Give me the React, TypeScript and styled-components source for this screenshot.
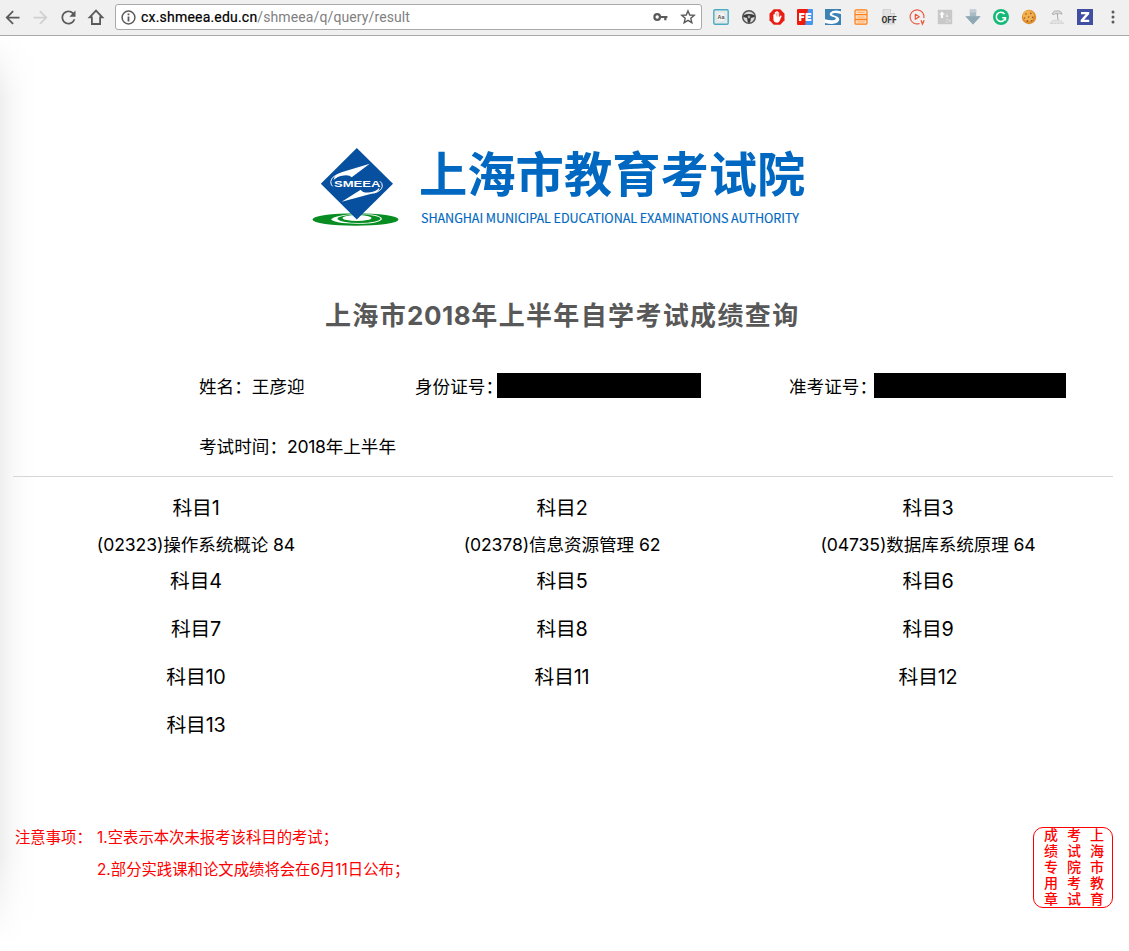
import React from "react";
import styled, { createGlobalStyle } from "styled-components";

const GlobalStyle = createGlobalStyle`
  * { box-sizing: border-box; }
  html, body { margin: 0; padding: 0; background: #fff; }
  body { overflow: hidden; }
`;

const cjk = `"Noto Sans CJK SC", sans-serif`;

const Page = styled.div`
  width: 1129px;
  height: 951px;
  display: flex;
  flex-direction: column;
  color: #000;
  font-family: Inter, ${cjk};
`;

const Toolbar = styled.header`
  height: 36px;
  flex: none;
  display: flex;
  align-items: flex-start;
  background: #f0f0f0;
  border-bottom: 1px solid #a9a9a9;
`;

const IconRow = styled.div<{ $start: number }>`
  display: flex;
  flex: none;
  height: 34px;
  margin-left: ${(p) => p.$start}px;
`;

const IconCell = styled.span`
  width: 28px;
  height: 34px;
  display: flex;
  align-items: center;
  justify-content: center;
  flex: none;
  svg { display: block; overflow: visible; }
`;

const AddressBar = styled.div`
  width: 587px;
  height: 26px;
  margin: 4px 0 0 5px;
  padding: 0 5px 0 5px;
  display: flex;
  align-items: center;
  background: #fff;
  border: 1px solid #a9a9a9;
  border-radius: 3px;
  svg { flex: none; display: block; }
`;

const Url = styled.span`
  flex: 1;
  margin-left: 5px;
  font: 400 14px/22px Roboto, sans-serif;
  letter-spacing: 0.11px;
  color: #808080;
  white-space: nowrap;
  b { font-weight: 400; letter-spacing: 0.2px; color: #000; -webkit-text-stroke: 0.2px #000; }
`;

const AddressActions = styled.span`
  display: flex;
  align-items: center;
  gap: 12px;
`;

const Sheet = styled.main`
  flex: 1;
  padding: 108px 16px 0 13px;
  display: flex;
  flex-direction: column;
  background:
    linear-gradient(to bottom, #fff 0, rgba(255, 255, 255, 0) 60px, rgba(255, 255, 255, 0) 820px, #fff 910px),
    linear-gradient(to right, #efefef 0, #f8f8f8 12px, #fdfdfd 24px, #fff 36px);
`;

const Brand = styled.div`
  height: 90px;
  padding-left: 299px;
  display: flex;
  svg { display: block; flex: none; }
`;

const BrandText = styled.div`
  margin-left: 18px;
  display: flex;
  flex-direction: column;
  color: #0068c0;
  font-family: ${cjk};
  white-space: nowrap;
`;

const BrandName = styled.span`
  font-size: 48.3px;
  line-height: 60px;
  height: 60px;
  margin-top: -3px;
  font-weight: 700;
`;

const BrandLatin = styled.span`
  font-size: 12.6px;
  line-height: 18px;
  margin: 8px 0 0 2px;
  letter-spacing: -0.07px;
  -webkit-text-stroke: 0.15px #0068c0;
`;

const Title = styled.h1`
  margin: 62px 0 0;
  height: 40px;
  padding-left: 312px;
  font-size: 26px;
  line-height: 40px;
  font-weight: 700;
  letter-spacing: 1.35px;
  color: #585858;
  white-space: nowrap;
`;

const Info = styled.dl`
  margin: 37px 0 0;
  height: 104px;
  padding-left: 186px;
  display: grid;
  grid-template-columns: 216px 374px 1fr;
  grid-template-rows: 26px 26px;
  row-gap: 34px;
  border-bottom: 1px solid #d6d6d6;
`;

const Field = styled.div<{ $wide?: boolean }>`
  display: flex;
  grid-column: ${(p) => (p.$wide ? "1 / -1" : "auto")};
  font-size: 17.6px;
  line-height: 28px;
  white-space: nowrap;
`;

const Label = styled.dt<{ $tight?: boolean }>`
  ${(p) => (p.$tight ? "width: 81px;" : "")}
`;

const Value = styled.dd`
  margin: 0;
`;

const Redacted = styled.dd<{ $width: number; $gap: number }>`
  margin: 0 0 0 ${(p) => p.$gap}px;
  width: ${(p) => p.$width}px;
  height: 25px;
  background: #000;
`;

const Digits = styled.span<{ $spacing: number }>`
  letter-spacing: ${(p) => p.$spacing}px;
`;

const Subjects = styled.section`
  width: 1099px;
  height: 260px;
  margin-top: 13px;
  display: grid;
  grid-template-columns: repeat(3, 366px);
  grid-template-rows: 73px repeat(4, 48px);
`;

const Subject = styled.div`
  display: flex;
  flex-direction: column;
  align-items: center;
`;

const SubjectName = styled.span`
  font-size: 19.8px;
  line-height: 36px;
  letter-spacing: -0.2px;
`;

const Score = styled.span`
  font-size: 17.6px;
  line-height: 37px;
  letter-spacing: -0.1px;
  white-space: nowrap;
`;

const Footer = styled.footer`
  width: 1100px;
  margin-top: 77px;
  display: flex;
  justify-content: space-between;
  color: #f00;
`;

const Notes = styled.div`
  display: flex;
  padding: 0 0 0 2px;
  margin-top: -5px;
  font-size: 15.36px;
  line-height: 32px;
  white-space: nowrap;
`;

const NoteLabel = styled.span`
  width: 82px;
`;

const NoteList = styled.div`
  display: flex;
  flex-direction: column;
`;

const Stamp = styled.div`
  width: 80px;
  height: 81px;
  border: 1px solid #f00;
  border-radius: 10px;
  padding: 0 5px 0 6px;
  display: flex;
  flex-direction: row-reverse;
  justify-content: space-between;
  font: 500 14px/21px ${cjk};
`;

const StampColumn = styled.span`
  writing-mode: vertical-rl;
  letter-spacing: 1.8px;
  white-space: nowrap;
`;

const Grey = "#5a5a5a";

const NavIcons = () => (
  <IconRow $start={-2}>
    <IconCell>
      <svg width="21" height="21" viewBox="0 0 24 24" fill={Grey}><path d="M20 11H7.83l5.59-5.59L12 4l-8 8 8 8 1.41-1.41L7.83 13H20v-2z" /></svg>
    </IconCell>
    <IconCell>
      <svg width="21" height="21" viewBox="0 0 24 24" fill="#d0d0d0"><path d="M12 4l-1.41 1.41L16.17 11H4v2h12.17l-5.58 5.59L12 20l8-8z" /></svg>
    </IconCell>
    <IconCell>
      <svg width="21" height="21" viewBox="0 0 24 24" fill={Grey}><path d="M17.65 6.35C16.2 4.9 14.21 4 12 4c-4.42 0-7.99 3.58-7.99 8s3.57 8 7.99 8c3.73 0 6.84-2.55 7.73-6h-2.08c-.82 2.33-3.04 4-5.65 4-3.31 0-6-2.69-6-6s2.69-6 6-6c1.66 0 3.14.69 4.22 1.78L13 11h7V4l-2.35 2.35z" /></svg>
    </IconCell>
    <IconCell>
      <svg width="16" height="16" viewBox="0 0 16 16" fill="none" stroke={Grey} strokeWidth="1.8"><path d="M8 1.6 1.6 8.4H3.9V15H12.1V8.4H14.4Z" /></svg>
    </IconCell>
  </IconRow>
);

const InfoIcon = () => (
  <svg width="15" height="15" viewBox="0 0 15 15">
    <circle cx="7.5" cy="7.5" r="6.4" fill="none" stroke={Grey} strokeWidth="1.5" />
    <path d="M6.6 3.6h1.8v1.7H6.6zM6.6 6.5h1.8v5H6.6z" fill={Grey} />
  </svg>
);

const KeyIcon = () => (
  <svg width="15" height="10" viewBox="0 0 15 10">
    <circle cx="4.2" cy="5" r="2.8" fill="none" stroke={Grey} strokeWidth="2.2" />
    <path d="M7 3.9h7.4v2.2h-.9V8.3h-2.3V6.1H7z" fill={Grey} />
  </svg>
);

const StarIcon = () => (
  <svg width="16" height="16" viewBox="0 0 16 16" fill="none" stroke={Grey} strokeWidth="1.4">
    <path d="m8 1.9 1.75 4.1 4.45.4-3.4 2.9 1.05 4.35L8 11.3l-3.85 2.35L5.2 9.3 1.8 6.4 6.25 6z" />
  </svg>
);

const Ext = ({ children }: { children: React.ReactNode }) => (
  <IconCell>
    <svg width="16" height="16" viewBox="0 0 16 16">{children}</svg>
  </IconCell>
);

const ExtensionIcons = () => (
  <IconRow $start={5}>
    <Ext>
      <rect x=".8" y=".8" width="14.4" height="14.4" rx="1.2" fill="#e6eaeb" stroke="#4aabc1" strokeWidth="1.4" />
      <circle cx="8" cy="8" r="5" fill="#f3f3f3" stroke="#d3dadc" strokeWidth=".6" />
      <text x="8" y="10.1" fontSize="5.4" fontWeight="700" textAnchor="middle" fill="#555" fontFamily="Liberation Sans, sans-serif">Aa</text>
    </Ext>
    <Ext>
      <circle cx="8" cy="8" r="6.3" fill="#d9d9d9" stroke="#555" strokeWidth="1.5" />
      <path d="M2 6.4Q8 3.8 14 6.4L13.6 8 10 9 9 13.800H7L6 9 2.4 8Z" fill="#3a3a3a" />
      <circle cx="8" cy="8" r="1.4" fill="#aaa" />
    </Ext>
    <Ext>
      <path d="M4.7.3h6.6l4.2 4.4v6.6l-4.2 4.4H4.7L.5 11.3V4.7z" fill="#e81c12" />
      <path d="M4.4 8V5.4q.8-.9 1.4 0V3.2q.8-.8 1.4 0V2.4q.9-.8 1.6 0v1q.8-.6 1.4.2v4.8l1-1.6q1-.7 1.5.1l-2.2 5.4q-1 1.7-3.3 1.3-2.8-.2-2.8-3.5z" fill="#fff" />
      <path d="M7.3 4v3.5M9 4v3.5" stroke="#e81c12" strokeWidth=".4" />
    </Ext>
    <Ext>
      <path d="M0 1q0-1 1-1h11L9 16H1q-1 0-1-1z" fill="#f11b0b" />
      <path d="M11 0h4q1 0 1 1v14q0 1-1 1H8z" fill="#4796f2" />
      <path d="M2 4h5.5v2H4.3v1.2h2.8v1.9H4.3V12H2zM8.5 4h5.8v2h-3.5v1.1h3.1v1.8h-3.1V10h3.5v2H8.5z" fill="#fff" />
    </Ext>
    <Ext>
      <rect width="16" height="16" fill="#3c82b5" />
      <path d="M16 2.2Q8 .4 5.4 3.4 3.4 6 6.8 7.4L10 8.6Q12 10 9.2 11 5.8 12 0 10.2V14q8 2 12-.2 4-3 1-5.8-1-.9-5-2.1-2-1 .4-1.7Q11 3.700 16 5z" fill="#fff" />
    </Ext>
    <Ext>
      <rect x="2" y=".8" width="12" height="14.4" rx="1.3" fill="#fbe2c9" stroke="#ff7e16" strokeWidth="1.2" />
      <path d="M2 5.7h12M2 10.5h12" stroke="#ff7e16" strokeWidth="1.3" />
      <path d="M4.3 3.3h7.4M4.3 8.1h7.4M4.3 12.9h7.4" stroke="#ffa85d" strokeWidth="1" />
    </Ext>
    <Ext>
      <path d="M2 .5h7.5l4 4V15H2z" fill="#e2e2e2" stroke="#c5c5c5" strokeWidth=".6" />
      <path d="M9.5.5v4h4" fill="#f8f8f8" stroke="#bdbdbd" strokeWidth=".6" />
      <text x="8" y="14.3" fontSize="9" fontWeight="700" textAnchor="middle" textLength="15" lengthAdjust="spacingAndGlyphs" fill="#333" fontFamily="Roboto, sans-serif">OFF</text>
    </Ext>
    <Ext>
      <path d="M10.5 14.4A7 7 0 1 1 14.9 9.2" fill="none" stroke="#e8573f" strokeWidth="1.1" />
      <path d="M6.3 5.3v5l4-2.500z" fill="none" stroke="#e8573f" strokeWidth="1.2" strokeLinejoin="round" />
      <path d="m12 11.3 1.5 3.700 1.700-3.700" fill="none" stroke="#e8573f" strokeWidth="1.3" />
    </Ext>
    <Ext>
      <rect x=".8" y=".8" width="14.4" height="14.4" fill="#c8c8c8" />
      <path d="M5 2.5 7.500 5.500H6V9H4V5.500H2.500zM10 3.500v3.500m0 1.200L8.800 6.800h2.400z" fill="#fff" stroke="#eee" strokeWidth=".4" />
      <path d="M8.700 10.500h2M8.700 13h2M11.500 10.500l2.300 2.600m0-2.600-2.300 2.600" stroke="#e4e4e4" strokeWidth=".8" />
    </Ext>
    <Ext>
      <path d="M4.8.5h6.400v6.800h4.400L8 15.400.400 7.300h4.400z" fill="#a9bcc5" />
      <path d="M4.8.5h6.400v3H4.800z" fill="#c2ced4" />
      <path d="M.4 7.300h15.200L8 15.400z" fill="#8fa8b4" />
    </Ext>
    <Ext>
      <circle cx="8" cy="8" r="8" fill="#14b877" />
      <path d="M11.6 5.100A4.600 4.600 0 1 0 12.400 8.700H9.200M12.400 8.500v3" fill="none" stroke="#fff" strokeWidth="1.600" />
    </Ext>
    <Ext>
      <circle cx="8" cy="8" r="7.2" fill="#dd8f2f" />
      <circle cx="7.3" cy="6.8" r="5.6" fill="#f2b04f" />
      <g fill="#9a5a22">
        <circle cx="5" cy="5" r=".8" /><circle cx="9.8" cy="4.3" r=".9" /><circle cx="7.700" cy="8" r=".8" />
        <circle cx="3.500" cy="9" r=".8" /><circle cx="11.7" cy="8.3" r=".9" /><circle cx="6.4" cy="12" r=".9" /><circle cx="10.5" cy="11.8" r=".8" />
      </g>
    </Ext>
    <Ext>
      <path d="M3 5Q5 .8 8 2q4-.9 5 3.200L10.500 4 9 5.500 7 4.300 5 5.500z" fill="#dedede" stroke="#a2a2a2" strokeWidth=".8" />
      <path d="M8.2 4 9 11" stroke="#aaa" strokeWidth="1" />
      <path d="M1 14.5Q4 9.800 7 11.500q5-1.500 8 3z" fill="#e2e2e2" stroke="#bdbdbd" strokeWidth=".6" strokeDasharray="2 1" />
    </Ext>
    <Ext>
      <rect width="16" height="16" fill="#414fa2" />
      <path d="M4 3h8.200v1.900l-5 5.900h5V13H3.700v-2l5-5.800H4z" fill="#fff" />
    </Ext>
    <Ext>
      <g fill={Grey}><circle cx="8" cy="3" r="1.5" /><circle cx="8" cy="8" r="1.5" /><circle cx="8" cy="13" r="1.5" /></g>
    </Ext>
  </IconRow>
);

const BrandMark = () => (
  <svg width="89" height="84" viewBox="0 0 89 84">
    <ellipse cx="43.5" cy="75.5" rx="43" ry="6.3" fill="#078d22" />
    <path d="M19 75.3Q23 71.500 39 70.2L60 70.5Q70 72 70 75.2 66 80 45 79.800 22 79.500 19 75.3Z" fill="#fff" />
    <ellipse cx="47" cy="74.8" rx="21.5" ry="4.2" fill="#078d22" />
    <ellipse cx="45" cy="74" rx="14.500" ry="3" fill="#fff" />
    <path d="M44.8 4 81 39.800 44.8 75.500 8.8 39.800Z" fill="#06509f" />
    <path d="M21.500 36Q22 30.500 30.300 28L57.700 19.700 39.700 33.200Q37.500 30.800 32 31.400 25 32.200 21.500 36Z" fill="#fff" />
    <path d="M67.500 43.500Q67.500 48.800 58.500 50L29.700 57.800 48.700 45.700Q51 49 56.500 48.500 64 47.800 67.500 43.500Z" fill="#fff" />
    <path d="M27 30Q19.500 32.500 18.800 37.500 18.600 40.500 20.500 42.300M62 49Q69.500 47 70.300 42.500 70.500 39 68 37.300" fill="none" stroke="#fff" strokeWidth="1" />
    <text x="22" y="42.8" fontSize="8.4" fontWeight="700" textLength="46.500" lengthAdjust="spacingAndGlyphs" fill="#fff" fontFamily="Liberation Sans, sans-serif">SMEEA</text>
  </svg>
);

const scores: Record<number, string> = {
  1: "(02323)操作系统概论 84",
  2: "(02378)信息资源管理 62",
  3: "(04735)数据库系统原理 64",
};

export default function App() {
  return (
    <Page>
      <GlobalStyle />
      <Toolbar>
        <NavIcons />
        <AddressBar>
          <InfoIcon />
          <Url><b>cx.shmeea.edu.cn</b>/shmeea/q/query/result</Url>
          <AddressActions><KeyIcon /><StarIcon /></AddressActions>
        </AddressBar>
        <ExtensionIcons />
      </Toolbar>
      <Sheet>
        <Brand>
          <BrandMark />
          <BrandText>
            <BrandName>上海市教育考试院</BrandName>
            <BrandLatin>SHANGHAI MUNICIPAL EDUCATIONAL EXAMINATIONS AUTHORITY</BrandLatin>
          </BrandText>
        </Brand>
        <Title>上海市<Digits $spacing={0.55}>2018</Digits>年上半年自学考试成绩查询</Title>
        <Info>
          <Field><Label>姓名：</Label><Value>王彦迎</Value></Field>
          <Field><Label $tight>身份证号：</Label><Redacted $width={204} $gap={1} /></Field>
          <Field><Label $tight>准考证号：</Label><Redacted $width={192} $gap={4} /></Field>
          <Field $wide><Label>考试时间：</Label><Value><Digits $spacing={-0.3}>2018</Digits>年上半年</Value></Field>
        </Info>
        <Subjects>
          {Array.from({ length: 13 }, (_, i) => i + 1).map((n) => (
            <Subject key={n}>
              <SubjectName>科目{n}</SubjectName>
              {scores[n] && <Score>{scores[n]}</Score>}
            </Subject>
          ))}
        </Subjects>
        <Footer>
          <Notes>
            <NoteLabel>注意事项：</NoteLabel>
            <NoteList>
              <span>1.空表示本次未报考该科目的考试；</span>
              <span>2.部分实践课和论文成绩将会在6月11日公布；</span>
            </NoteList>
          </Notes>
          <Stamp>
            <StampColumn>上海市教育</StampColumn>
            <StampColumn>考试院考试</StampColumn>
            <StampColumn>成绩专用章</StampColumn>
          </Stamp>
        </Footer>
      </Sheet>
    </Page>
  );
}
